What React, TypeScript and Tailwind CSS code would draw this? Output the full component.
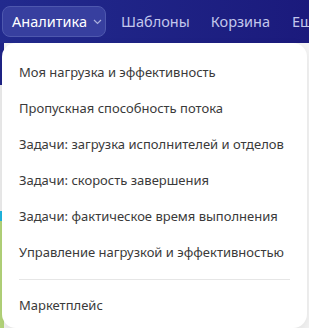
import React from 'react';

const items = [
  'Моя нагрузка и эффективность',
  'Пропускная способность потока',
  'Задачи: загрузка исполнителей и отделов',
  'Задачи: скорость завершения',
  'Задачи: фактическое время выполнения',
  'Управление нагрузкой и эффективностью',
];

export default function App() {
  return (
    <div className="relative h-[328px] w-[309px] overflow-hidden bg-white" style={{ fontFamily: '"Noto Sans", "Open Sans", sans-serif' }}>
      <nav className="flex h-[43px] items-center whitespace-nowrap bg-gradient-to-r from-[#222a8e] to-[#1b1a7c] pl-[2px] text-[14.5px]">
        <button className="flex h-[31px] w-[104px] shrink-0 items-center gap-[6px] rounded-lg border border-[#4e58ae] bg-[#373f9f] pl-[9px] text-white">
          Аналитика
          <svg width="9" height="6" viewBox="0 0 9 6" fill="none" stroke="#aab0dc" strokeWidth="1.2">
            <path d="M1 1l3.5 3.5L8 1" />
          </svg>
        </button>
        <span className="ml-[15px] shrink-0 text-[#c3c7ec]">Шаблоны</span>
        <span className="ml-[21px] shrink-0 text-[#c3c7ec]">Корзина</span>
        <span className="ml-[22px] shrink-0 text-[#c3c7ec]">Ещё</span>
      </nav>

      <div className="flex h-[285px]">
        <div className="flex w-[4px] flex-col">
          <div className="h-[42px] bg-[#1f2488]" />
          <div className="h-[126px] bg-[#eeeeee]" />
          <div className="h-[10px] bg-[#1fb6e0]" />
          <div className="flex-1 bg-[#b4d57a]" />
        </div>
        <div className="flex-1 bg-[#f4f4f4]" />
      </div>

      <div className="absolute left-[2px] top-[43px] w-[305px] rounded-[14px] bg-white pb-[4px] pt-[12px] shadow-[0_4px_12px_rgba(0,0,0,0.08)]">
        {items.map((t) => (
          <div key={t} className="flex h-[36px] items-center px-[17px] text-[13px] text-[#3a3a3a]">
            {t}
          </div>
        ))}
        <div className="mx-[17px] my-[8px] h-px bg-[#e6e6e6]" />
        <div className="flex h-[36px] items-center px-[17px] text-[13px] text-[#3a3a3a]">Маркетплейс</div>
      </div>
    </div>
  );
}
